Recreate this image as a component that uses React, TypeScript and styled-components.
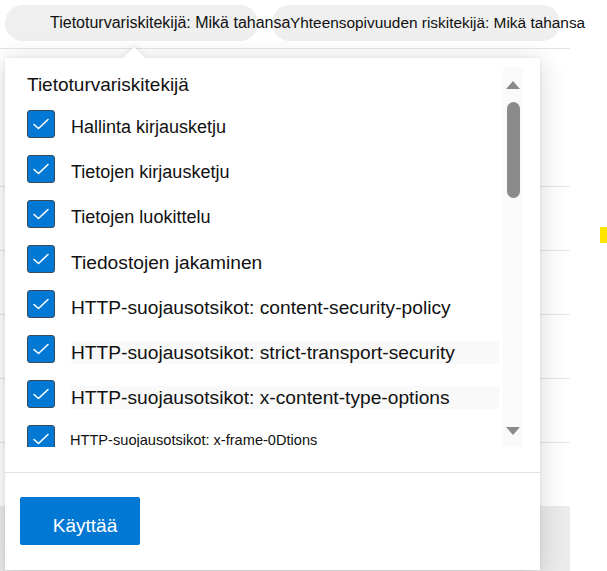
import React from "react";
import styled, { createGlobalStyle } from "styled-components";

const GlobalStyle = createGlobalStyle`
  html, body { margin: 0; padding: 0; background: #fff; }
  body { font-family: "Liberation Sans", Arial, sans-serif; color: #111; }
`;

const Screen = styled.div`
  position: relative;
  width: 607px;
  height: 571px;
  overflow: hidden;
  background: #fff;
`;

const FilterBar = styled.div`
  display: flex;
  gap: 14px;
  padding: 5px 0 0 5px;
  height: 48px;
  box-sizing: border-box;
`;

const Pill = styled.div<{ $w: number; $pad: number }>`
  flex: none;
  width: ${(p) => p.$w}px;
  height: 36px;
  box-sizing: border-box;
  padding-left: ${(p) => p.$pad}px;
  border-radius: 18px;
  background: #efefef;
  display: flex;
  align-items: center;
  white-space: nowrap;
`;

const PillText = styled.span<{ $size: number }>`
  position: relative;
  z-index: 1;
  font-size: ${(p) => p.$size}px;
  color: #111;
`;

const Table = styled.div`
  width: 570px;
  border-top: 1px solid #e3e3e3;
`;

const Row = styled.div<{ $h: number; $last?: boolean }>`
  height: ${(p) => p.$h}px;
  box-sizing: border-box;
  border-bottom: ${(p) => (p.$last ? "none" : "1px solid #e6e6e6")};
`;

const GrayStrip = styled.div`
  height: 70px;
  background: #ebebeb;
`;

const Marker = styled.div`
  position: absolute;
  left: 600px;
  top: 227px;
  width: 7px;
  height: 16px;
  background: #ffe600;
`;

const Panel = styled.div`
  position: absolute;
  left: 5px;
  top: 58px;
  width: 535px;
  height: 512px;
  background: #fff;
  box-shadow: 0 4px 26px rgba(0, 0, 0, 0.16), 0 0 4px rgba(0, 0, 0, 0.08);
  display: flex;
  flex-direction: column;
`;

const Notch = styled.div`
  position: absolute;
  left: 121px;
  top: -8px;
  width: 16px;
  height: 16px;
  background: #fff;
  transform: rotate(45deg);
  box-shadow: -2px -2px 4px rgba(0, 0, 0, 0.06);
`;

const ScrollArea = styled.div`
  position: relative;
  height: 389px;
  display: flex;
  overflow: hidden;
`;

const ListColumn = styled.div`
  flex: 1;
  padding: 14px 0 0 22px;
`;

const Heading = styled.div`
  height: 29px;
  font-size: 19px;
  line-height: 26px;
  color: #111;
`;

const Item = styled.label`
  display: flex;
  align-items: center;
  height: 45px;
`;

const Box = styled.span`
  flex: none;
  width: 28px;
  height: 28px;
  box-sizing: border-box;
  border: 1px solid #3d4a57;
  border-radius: 3px;
  background: #0078d4;
  display: flex;
  align-items: center;
  justify-content: center;
`;

const Label = styled.span<{ $size: number; $shaded?: boolean }>`
  margin: ${(p) => (p.$size < 16 ? "3px 0 0 15px" : "8px 0 0 16px")};
  padding-right: 30px;
  font-size: ${(p) => p.$size}px;
  line-height: ${(p) => (p.$size < 16 ? 15 : 23)}px;
  color: #111;
  white-space: nowrap;
  background: ${(p) => (p.$shaded ? "#f9f9f9" : "transparent")};
  flex: ${(p) => (p.$shaded ? 1 : "none")};
`;

const ScrollTrack = styled.div`
  flex: none;
  width: 20px;
  margin: 9px 17px 0 4px;
  background: #fafafa;
  display: flex;
  flex-direction: column;
  align-items: center;
`;

const Arrow = styled.div<{ $down?: boolean }>`
  width: 0;
  height: 0;
  border-left: 7px solid transparent;
  border-right: 7px solid transparent;
  ${(p) =>
    p.$down
      ? "border-top: 8px solid #8a8a8a; margin-top: auto; margin-bottom: 12px;"
      : "border-bottom: 8px solid #8a8a8a; margin-top: 14px;"}
`;

const Thumb = styled.div`
  width: 13px;
  height: 96px;
  margin-top: 13px;
  border-radius: 7px;
  background: #8a8a8a;
`;

const Divider = styled.div`
  margin-top: 25px;
  border-top: 1px solid #e1e1e1;
`;

const Footer = styled.div`
  padding: 24px 0 0 15px;
`;

const ApplyButton = styled.button`
  width: 120px;
  height: 48px;
  border: none;
  border-radius: 2px;
  background: #0078d4;
  color: #fff;
  font-family: "Liberation Sans", Arial, sans-serif;
  font-size: 19px;
  padding: 9px 0 0 10px;
`;

const Check = () => (
  <svg width="18" height="12" viewBox="0 0 18 12">
    <polyline
      points="2,6.5 6.5,10.5 16,1.5"
      fill="none"
      stroke="#fff"
      strokeWidth="1.6"
      strokeLinecap="round"
      strokeLinejoin="round"
    />
  </svg>
);

const items = [
  { text: "Hallinta kirjausketju", size: 18 },
  { text: "Tietojen kirjausketju", size: 18 },
  { text: "Tietojen luokittelu", size: 18 },
  { text: "Tiedostojen jakaminen", size: 19.2 },
  { text: "HTTP-suojausotsikot: content-security-policy", size: 19.2 },
  { text: "HTTP-suojausotsikot: strict-transport-security", size: 19.2, shaded: true },
  { text: "HTTP-suojausotsikot: x-content-type-options", size: 19.2, shaded: true },
  { text: "HTTP-suojausotsikot: x-frame-0Dtions", size: 14.6 },
];

const rowHeights = [138, 64, 64, 64, 64, 63];

export default function App() {
  return (
    <Screen>
      <GlobalStyle />
      <FilterBar>
        <Pill $w={253} $pad={45}>
          <PillText $size={16}>Tietoturvariskitekijä: Mikä tahansa</PillText>
        </Pill>
        <Pill $w={288} $pad={18}>
          <PillText $size={15.4}>Yhteensopivuuden riskitekijä: Mikä tahansa</PillText>
        </Pill>
      </FilterBar>
      <Table>
        {rowHeights.map((h, i) => (
          <Row key={i} $h={h} $last={i === rowHeights.length - 1} />
        ))}
        <GrayStrip />
      </Table>
      <Marker />

      <Panel>
        <Notch />
        <ScrollArea>
          <ListColumn>
            <Heading>Tietoturvariskitekijä</Heading>
            {items.map((it) => (
              <Item key={it.text}>
                <Box>
                  <Check />
                </Box>
                <Label $size={it.size} $shaded={it.shaded}>
                  {it.text}
                </Label>
              </Item>
            ))}
          </ListColumn>
          <ScrollTrack>
            <Arrow />
            <Thumb />
            <Arrow $down />
          </ScrollTrack>
        </ScrollArea>
        <Divider />
        <Footer>
          <ApplyButton>Käyttää</ApplyButton>
        </Footer>
      </Panel>
    </Screen>
  );
}
